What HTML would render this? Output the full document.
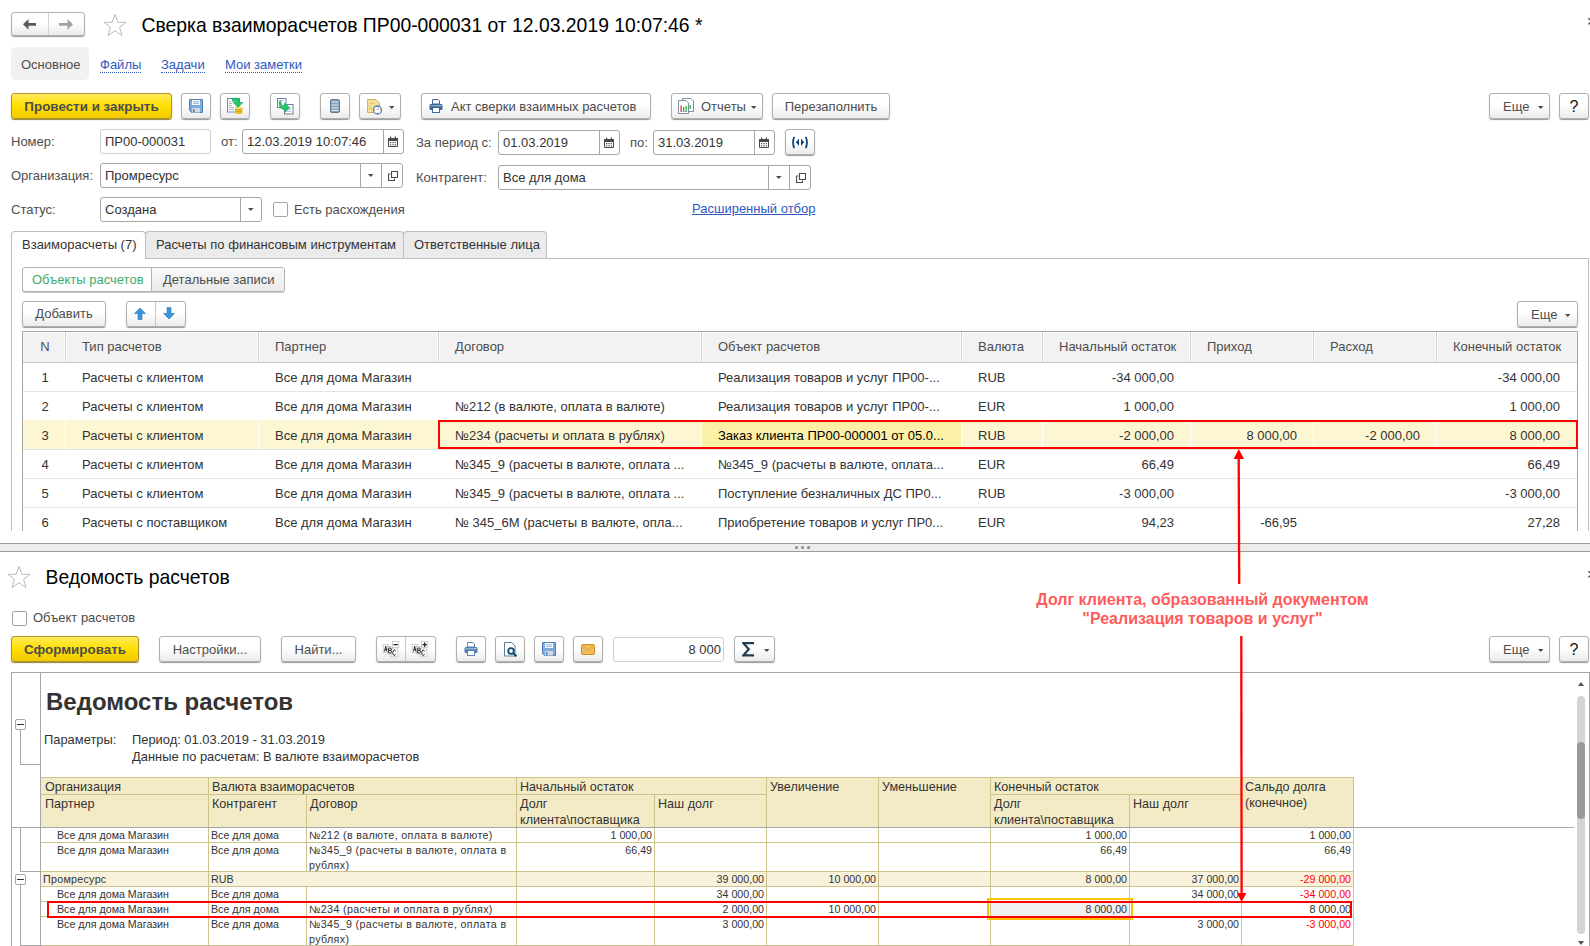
<!DOCTYPE html>
<html><head><meta charset="utf-8">
<style>
*{box-sizing:border-box;margin:0;padding:0}
html,body{width:1590px;height:946px;overflow:hidden;background:#fff}
body{position:relative;font-family:"Liberation Sans",sans-serif;font-size:13px;color:#4d4d4d}
.a{position:absolute}
.t{position:absolute;white-space:nowrap;line-height:16px}
.btn{position:absolute;border:1px solid #b0b0b0;border-radius:3px;background:linear-gradient(#fff 0%,#fff 45%,#ebebeb 100%);box-shadow:0 1px 1px #969696;color:#4d4d4d;text-align:center;white-space:nowrap}
.ybtn{position:absolute;border:1px solid #ad952c;border-radius:3px;background:linear-gradient(#ffe95a 0%,#ffe000 50%,#f2c800 100%);box-shadow:0 1px 1px #8f8130;color:#4d4d4d;font-weight:bold;font-size:13.4px;text-align:center;white-space:nowrap}
.fld{position:absolute;border:1px solid #a6a6a6;border-radius:3px;background:#fff;color:#333;white-space:nowrap;overflow:hidden}
.fld span{position:absolute;left:4px;top:4px;line-height:16px}
.dd{position:absolute;top:0;bottom:0;border-left:1px solid #a6a6a6}
.r{position:absolute;white-space:nowrap;font-size:10.67px;line-height:14.5px}
.link{color:#2f58c0;border-bottom:1px dotted #2f58c0}
</style></head><body>
<svg width="0" height="0" style="position:absolute">
 <defs>
  <g id="cal"><path d="M0.5 2.5 h9 v8 h-9 Z" fill="#fff" stroke="#4a4a4a" stroke-width="1"/><rect x="0" y="2" width="10" height="3" fill="#4a4a4a"/><rect x="2" y="0.5" width="1.2" height="2.5" fill="#4a4a4a"/><rect x="6.8" y="0.5" width="1.2" height="2.5" fill="#4a4a4a"/><g fill="#4a4a4a"><rect x="2" y="6" width="1.2" height="1.2"/><rect x="4.4" y="6" width="1.2" height="1.2"/><rect x="6.8" y="6" width="1.2" height="1.2"/><rect x="2" y="8.2" width="1.2" height="1.2"/><rect x="4.4" y="8.2" width="1.2" height="1.2"/><rect x="6.8" y="8.2" width="1.2" height="1.2"/></g></g>
  <g id="tri"><path d="M0 0 H5.5 L2.75 3 Z" fill="#4a4a4a"/></g>
  <g id="opn"><path d="M3.5 0.5 H9.5 V6.5 H3.5 Z" fill="#fff" stroke="#4a4a4a" stroke-width="1.1"/><path d="M2.5 3 H0.5 V9.5 H6.5 V7.5" fill="none" stroke="#4a4a4a" stroke-width="1.1"/></g>
 </defs>
</svg>

<!-- ======== TOP FORM ======== -->
<!-- nav buttons -->
<div class="btn" style="left:11px;top:12px;width:74px;height:24px"></div>
<div class="a" style="left:48px;top:13px;width:1px;height:22px;background:#d4d4d4"></div>
<svg class="a" style="left:22px;top:18px" width="16" height="13" viewBox="0 0 16 13"><path d="M1 6.3 L6.5 1 L6.5 5 L14 5 L14 7.8 L6.5 7.8 L6.5 11.8 Z" fill="#5a5a5a"/></svg>
<svg class="a" style="left:58px;top:18px" width="16" height="13" viewBox="0 0 16 13"><path d="M15 6.3 L9.5 1 L9.5 5 L1 5 L1 7.8 L9.5 7.8 L9.5 11.8 Z" fill="#a3a3a3"/></svg>
<!-- star -->
<svg class="a" style="left:102px;top:13px" width="26" height="24" viewBox="0 0 26 24"><path d="M13 1.5 L15.9 9.3 L24 9.3 L17.6 14.3 L19.9 22.5 L13 17.6 L6.1 22.5 L8.4 14.3 L2 9.3 L10.1 9.3 Z" fill="none" stroke="#b4bcc4" stroke-width="1"/></svg>
<div class="t" style="left:141.5px;top:14px;font-size:19.35px;line-height:22px;color:#000">Сверка взаиморасчетов ПР00-000031 от 12.03.2019 10:07:46 *</div>
<svg class="a" style="left:1586px;top:16px" width="4" height="10" viewBox="0 0 4 10"><path d="M2.4 2.2 L5.7 5.3 M2.4 8.4 L5.7 5.3" stroke="#3a3a3a" stroke-width="1.2" fill="none"/></svg>

<!-- section tabs -->
<div class="a" style="left:11px;top:47px;width:78px;height:33px;background:#f1f1f1;border-radius:5px"></div>
<div class="t" style="left:21px;top:57px;color:#4d4d4d">Основное</div>
<div class="t" style="left:100px;top:57px"><span class="link">Файлы</span></div>
<div class="t" style="left:161px;top:57px"><span class="link">Задачи</span></div>
<div class="t" style="left:225px;top:57px"><span class="link">Мои заметки</span></div>

<!-- toolbar -->
<div class="ybtn" style="left:11px;top:93px;width:161px;height:26px;line-height:25px">Провести и закрыть</div>
<div class="btn" style="left:181px;top:93px;width:30px;height:26px"></div>
<svg class="a" style="left:189px;top:99px" width="14" height="14" viewBox="0 0 14 14"><path d="M0.5 0.5 H13.5 V13.5 H2.5 L0.5 11.5 Z" fill="#7ea9dc" stroke="#4f7fb8" stroke-width="1"/><rect x="3" y="1" width="8" height="5" fill="#fff"/><rect x="4" y="2.3" width="6" height="0.9" fill="#7ea9dc"/><rect x="4" y="4.2" width="6" height="0.9" fill="#7ea9dc"/><rect x="3" y="9" width="8" height="4.5" fill="#d4dbe0"/><rect x="4" y="10" width="1.5" height="3" fill="#4f7fb8"/></svg>
<div class="btn" style="left:220px;top:93px;width:30px;height:26px"></div>
<svg class="a" style="left:226px;top:97px" width="18" height="18" viewBox="0 0 18 18"><rect x="1.5" y="1.5" width="12" height="13.5" fill="#fff" stroke="#6d89aa" stroke-width="1"/><g fill="#8aa0b8"><rect x="3" y="4" width="2" height="0.8"/><rect x="3" y="6" width="3" height="0.8"/><rect x="3" y="8" width="3" height="0.8"/><rect x="3" y="10" width="5" height="0.8"/><rect x="3" y="12" width="5" height="0.8"/></g><path d="M9 10.5 h7.4 v5 a3.7 1.6 0 0 1 -7.4 0 Z" fill="#e9c632"/><ellipse cx="12.7" cy="10.5" rx="3.7" ry="1.5" fill="#f7e07a"/><rect x="9" y="12.3" width="7.4" height="0.8" fill="#c9a20f"/><rect x="9" y="14.3" width="7.4" height="0.8" fill="#c9a20f"/><path d="M6.5 1.2 H10.5 Q13.5 1.2 13.5 4.2 V5.5 H16.8 L12 10.3 L7.2 5.5 H10.3 V4.6 Q10.3 4.3 10 4.3 H6.5 Z" fill="#22c76a" stroke="#129a4d" stroke-width="0.6"/></svg>
<div class="btn" style="left:270px;top:93px;width:30px;height:26px"></div>
<svg class="a" style="left:276px;top:97px" width="18" height="18" viewBox="0 0 18 18"><rect x="1.5" y="1.5" width="8.5" height="9" fill="#fff" stroke="#6d82a0" stroke-width="1"/><rect x="3" y="3.3" width="5" height="0.7" fill="#8aa0b8"/><rect x="8.5" y="7.5" width="8.5" height="9.5" fill="#fff" stroke="#6d82a0" stroke-width="1"/><g fill="#8aa0b8"><rect x="11" y="10" width="4" height="0.7"/><rect x="11" y="12" width="4" height="0.7"/><rect x="11" y="14" width="4" height="0.7"/></g><path d="M3 5 Q3.5 4 5 4.5 L5.5 8 Q6 9 8 8.5 L8.5 6 L13.5 10.5 L9 15.5 L8.8 12.5 Q4.5 12.5 3.5 9 Z" fill="#22c46a" stroke="#109a4c" stroke-width="0.5"/></svg>
<div class="btn" style="left:320px;top:93px;width:30px;height:26px"></div>
<svg class="a" style="left:330px;top:99px" width="10" height="14" viewBox="0 0 10 14"><rect x="0.5" y="0.5" width="9" height="13" rx="1.5" fill="#86a2bb" stroke="#5a7994" stroke-width="1"/><g fill="#dfe8f0"><rect x="1.5" y="2.5" width="7" height="1"/><rect x="1.5" y="5.5" width="7" height="1"/><rect x="1.5" y="8.5" width="7" height="1"/><rect x="1.5" y="11" width="7" height="1"/></g></svg>
<div class="btn" style="left:359px;top:93px;width:42px;height:26px"></div>
<svg class="a" style="left:366px;top:98px" width="16" height="17" viewBox="0 0 16 17"><path d="M1.5 1.5 H10 L13.5 5 V14.5 H1.5 Z" fill="#f1df9a" stroke="#d1b65c" stroke-width="1"/><g fill="#c9b36a"><rect x="3" y="5" width="2" height="0.8"/><rect x="6" y="5" width="2" height="0.8"/><rect x="3" y="7.5" width="1.5" height="0.8"/><rect x="3" y="10" width="3" height="0.8"/></g><circle cx="11.5" cy="12" r="4" fill="#fff" stroke="#5b86b8" stroke-width="1.3"/><g fill="#e02020"><circle cx="11.5" cy="8.6" r="0.6"/><circle cx="11.5" cy="15.4" r="0.6"/><circle cx="8.1" cy="12" r="0.6"/><circle cx="14.9" cy="12" r="0.6"/></g><path d="M11.5 12 L13 10" stroke="#5b86b8" stroke-width="0.8"/></svg>
<svg class="a" style="left:389px;top:106px" width="6" height="4"><use href="#tri"/></svg>
<div class="btn" style="left:421px;top:93px;width:230px;height:26px;line-height:25px;text-align:left;padding-left:29px">Акт сверки взаимных расчетов</div>
<svg class="a" style="left:429px;top:99px" width="14" height="14" viewBox="0 0 14 14"><path d="M3.5 0.5 H9 L10.5 2 V5 H3.5 Z" fill="#fff" stroke="#2c5a88" stroke-width="0.9"/><rect x="0.5" y="5" width="13" height="6" rx="1.5" fill="#3a6898"/><rect x="1.5" y="6.3" width="11" height="1" fill="#9fbad4"/><rect x="3.5" y="8.5" width="7" height="5" fill="#fff" stroke="#2c5a88" stroke-width="0.9"/><rect x="10.5" y="6.3" width="1" height="0.8" fill="#fff"/></svg>
<div class="btn" style="left:671px;top:93px;width:92px;height:26px;line-height:25px;text-align:left;padding-left:29px">Отчеты</div>
<svg class="a" style="left:678px;top:98px" width="17" height="17" viewBox="0 0 17 17"><path d="M4.5 0.5 H13 L15.5 3 V13.5 H4.5 Z" fill="#fff" stroke="#6f8296" stroke-width="0.9"/><path d="M0.5 2.5 H8 L10.5 5 V15.5 H0.5 Z" fill="#fff" stroke="#6f8296" stroke-width="0.9"/><rect x="2.5" y="7.5" width="1.3" height="5.5" fill="#e8352a"/><rect x="5" y="9" width="1.3" height="4" fill="#2fb24a"/><rect x="7.5" y="8" width="1.3" height="5" fill="#2fb24a"/><rect x="11.5" y="7" width="1.3" height="4" fill="#2fb24a"/><rect x="2" y="13" width="7.5" height="0.7" fill="#8a8a8a"/></svg>
<svg class="a" style="left:751px;top:106px" width="6" height="4"><use href="#tri"/></svg>
<div class="btn" style="left:772px;top:93px;width:118px;height:26px;line-height:25px">Перезаполнить</div>
<div class="btn" style="left:1489px;top:93px;width:61px;height:26px;line-height:25px;text-align:left;padding-left:13px">Еще</div>
<svg class="a" style="left:1538px;top:106px" width="6" height="4"><use href="#tri"/></svg>
<div class="btn" style="left:1559px;top:93px;width:30px;height:26px;line-height:25px;color:#111;font-size:16px">?</div>

<!-- fields row 1 -->
<div class="t" style="left:11px;top:134px">Номер:</div>
<div class="fld" style="left:100px;top:129px;width:111px;height:25px;border-color:#cfcfcf"><span>ПР00-000031</span></div>
<div class="t" style="left:221px;top:134px">от:</div>
<div class="fld" style="left:242px;top:129px;width:162px;height:25px"><span>12.03.2019 10:07:46</span><div class="dd" style="left:140px"></div><svg class="a" style="left:145px;top:6px" width="10" height="11"><use href="#cal"/></svg></div>
<div class="t" style="left:416px;top:135px">За период с:</div>
<div class="fld" style="left:498px;top:130px;width:122px;height:25px"><span>01.03.2019</span><div class="dd" style="left:100px"></div><svg class="a" style="left:105px;top:6px" width="10" height="11"><use href="#cal"/></svg></div>
<div class="t" style="left:630px;top:135px">по:</div>
<div class="fld" style="left:653px;top:130px;width:122px;height:25px"><span>31.03.2019</span><div class="dd" style="left:100px"></div><svg class="a" style="left:105px;top:6px" width="10" height="11"><use href="#cal"/></svg></div>
<div class="btn" style="left:785px;top:129px;width:30px;height:26px"></div>
<svg class="a" style="left:791px;top:136px" width="18" height="13" viewBox="0 0 18 13"><path d="M3.3 0.8 Q0.8 6.5 3.3 12.2" fill="none" stroke="#0e4a7c" stroke-width="1.8"/><path d="M14.7 0.8 Q17.2 6.5 14.7 12.2" fill="none" stroke="#0e4a7c" stroke-width="1.8"/><path d="M8 2.5 L8 10 L4.8 6.3 Z" fill="#0e4a7c"/><path d="M10 2.5 L10 10 L13.2 6.3 Z" fill="#0e4a7c"/></svg>

<!-- fields row 2 -->
<div class="t" style="left:11px;top:168px">Организация:</div>
<div class="fld" style="left:100px;top:163px;width:303px;height:25px"><span>Промресурс</span><div class="dd" style="left:259px"></div><div class="dd" style="left:280px"></div><svg class="a" style="left:267px;top:10px" width="6" height="4"><use href="#tri"/></svg><svg class="a" style="left:287px;top:7px" width="10" height="10"><use href="#opn"/></svg></div>
<div class="t" style="left:416px;top:170px">Контрагент:</div>
<div class="fld" style="left:498px;top:165px;width:313px;height:25px"><span>Все для дома</span><div class="dd" style="left:269px"></div><div class="dd" style="left:290px"></div><svg class="a" style="left:277px;top:10px" width="6" height="4"><use href="#tri"/></svg><svg class="a" style="left:297px;top:7px" width="10" height="10"><use href="#opn"/></svg></div>

<!-- fields row 3 -->
<div class="t" style="left:11px;top:202px">Статус:</div>
<div class="fld" style="left:100px;top:197px;width:162px;height:25px"><span>Создана</span><div class="dd" style="left:139px"></div><svg class="a" style="left:147px;top:10px" width="6" height="4"><use href="#tri"/></svg></div>
<div class="a" style="left:273px;top:202px;width:15px;height:15px;border:1px solid #a6a6a6;border-radius:2px;background:#fff"></div>
<div class="t" style="left:294px;top:202px">Есть расхождения</div>
<div class="t" style="left:692px;top:201px;color:#2f58c0;text-decoration:underline">Расширенный отбор</div>

<!-- tabs -->
<div class="a" style="left:11px;top:258px;width:1578px;height:1px;background:#bdbdbd"></div>
<div class="a" style="left:1588px;top:258px;width:1px;height:273px;background:#bdbdbd"></div>
<div class="a" style="left:11px;top:258px;width:1px;height:273px;background:#bdbdbd"></div>
<div class="a" style="left:145px;top:231px;width:259px;height:27px;border:1px solid #bdbdbd;border-bottom:none;border-radius:4px 4px 0 0;background:#ebebeb"></div>
<div class="t" style="left:156px;top:237px;color:#333">Расчеты по финансовым инструментам</div>
<div class="a" style="left:403px;top:231px;width:144px;height:27px;border:1px solid #bdbdbd;border-bottom:none;border-radius:4px 4px 0 0;background:#ebebeb"></div>
<div class="t" style="left:414px;top:237px;color:#333">Ответственные лица</div>
<div class="a" style="left:11px;top:231px;width:135px;height:28px;border:1px solid #bdbdbd;border-bottom:none;border-radius:4px 4px 0 0;background:#fff"></div>
<div class="t" style="left:22px;top:237px;color:#333">Взаиморасчеты (7)</div>

<!-- subtabs -->
<div class="a" style="left:22px;top:267px;width:263px;height:25px;border:1px solid #b3b3b3;border-radius:3px;background:#fff;box-shadow:0 1px 0 #c8c8c8"></div>
<div class="a" style="left:151px;top:268px;width:133px;height:23px;border-left:1px solid #b3b3b3;background:linear-gradient(#fafafa,#e9e9e9);border-radius:0 2px 2px 0"></div>
<div class="t" style="left:32px;top:272px;color:#40ad6d">Объекты расчетов</div>
<div class="t" style="left:163px;top:272px;color:#4d4d4d">Детальные записи</div>

<!-- add / arrows -->
<div class="btn" style="left:22px;top:301px;width:84px;height:26px;line-height:24px">Добавить</div>
<div class="btn" style="left:126px;top:301px;width:60px;height:26px"></div>
<div class="a" style="left:155px;top:302px;width:1px;height:24px;background:#c8c8c8"></div>
<svg class="a" style="left:134px;top:307px" width="12" height="14" viewBox="0 0 12 14"><path d="M6 1 L11.5 6.5 L8 6.5 L8 12.5 L4 12.5 L4 6.5 L0.5 6.5 Z" fill="#3a96dc" stroke="#2a78b8" stroke-width="0.6"/></svg>
<svg class="a" style="left:163px;top:306px" width="12" height="14" viewBox="0 0 12 14"><path d="M6 13 L11.5 7.5 L8 7.5 L8 1.5 L4 1.5 L4 7.5 L0.5 7.5 Z" fill="#3a96dc" stroke="#2a78b8" stroke-width="0.6"/></svg>
<div class="btn" style="left:1517px;top:301px;width:61px;height:26px;line-height:25px;text-align:left;padding-left:13px">Еще</div>
<svg class="a" style="left:1565px;top:314px" width="6" height="4"><use href="#tri"/></svg>

<!-- table -->
<div class="a" style="left:22px;top:331px;width:1556px;height:200px;border:1px solid #a8a8a8;border-bottom:none;overflow:hidden;background:#fff">
 <div class="a" style="left:0;top:0;width:1556px;height:30px;background:#f2f2f2;border-bottom:1px solid #d0d0d0"></div>
</div>

<div class="a" style="left:0;top:0;width:1590px;height:531px;overflow:hidden">
<div class="a" style="left:22px;top:331px;width:1556px;height:200px;border-left:1px solid #a6a6a6;border-top:1px solid #a6a6a6;border-right:1px solid #a6a6a6"></div>
<div class="a" style="left:23px;top:332px;width:1554px;height:31px;background:#f2f2f2;border-top:1px solid #fff;border-bottom:1px solid #c9c9c9"></div>
<div class="a" style="left:64px;top:332px;width:3px;height:30px;background:#fff"></div>
<div class="a" style="left:65px;top:332px;width:1px;height:30px;background:#cfcfcf"></div>
<div class="a" style="left:257px;top:332px;width:3px;height:30px;background:#fff"></div>
<div class="a" style="left:258px;top:332px;width:1px;height:30px;background:#cfcfcf"></div>
<div class="a" style="left:437px;top:332px;width:3px;height:30px;background:#fff"></div>
<div class="a" style="left:438px;top:332px;width:1px;height:30px;background:#cfcfcf"></div>
<div class="a" style="left:700px;top:332px;width:3px;height:30px;background:#fff"></div>
<div class="a" style="left:701px;top:332px;width:1px;height:30px;background:#cfcfcf"></div>
<div class="a" style="left:960px;top:332px;width:3px;height:30px;background:#fff"></div>
<div class="a" style="left:961px;top:332px;width:1px;height:30px;background:#cfcfcf"></div>
<div class="a" style="left:1041px;top:332px;width:3px;height:30px;background:#fff"></div>
<div class="a" style="left:1042px;top:332px;width:1px;height:30px;background:#cfcfcf"></div>
<div class="a" style="left:1189px;top:332px;width:3px;height:30px;background:#fff"></div>
<div class="a" style="left:1190px;top:332px;width:1px;height:30px;background:#cfcfcf"></div>
<div class="a" style="left:1312px;top:332px;width:3px;height:30px;background:#fff"></div>
<div class="a" style="left:1313px;top:332px;width:1px;height:30px;background:#cfcfcf"></div>
<div class="a" style="left:1435px;top:332px;width:3px;height:30px;background:#fff"></div>
<div class="a" style="left:1436px;top:332px;width:1px;height:30px;background:#cfcfcf"></div>
<div class="t" style="left:24px;width:42px;text-align:center;top:339px;color:#4d4d4d">N</div>
<div class="t" style="left:82px;top:339px;color:#4d4d4d">Тип расчетов</div>
<div class="t" style="left:275px;top:339px;color:#4d4d4d">Партнер</div>
<div class="t" style="left:455px;top:339px;color:#4d4d4d">Договор</div>
<div class="t" style="left:718px;top:339px;color:#4d4d4d">Объект расчетов</div>
<div class="t" style="left:978px;top:339px;color:#4d4d4d">Валюта</div>
<div class="t" style="left:1059px;top:339px;color:#4d4d4d">Начальный остаток</div>
<div class="t" style="left:1207px;top:339px;color:#4d4d4d">Приход</div>
<div class="t" style="left:1330px;top:339px;color:#4d4d4d">Расход</div>
<div class="t" style="left:1453px;top:339px;color:#4d4d4d">Конечный остаток</div>
<div class="a" style="left:23px;top:391px;width:1554px;height:1px;background:#e4e4e4"></div>
<div class="t" style="left:24px;width:42px;text-align:center;top:370px;color:#333">1</div>
<div class="t" style="left:82px;top:370px;color:#333">Расчеты с клиентом</div>
<div class="t" style="left:275px;top:370px;color:#333">Все для дома Магазин</div>
<div class="t" style="left:718px;top:370px;color:#333">Реализация товаров и услуг ПР00-...</div>
<div class="t" style="left:978px;top:370px;color:#333">RUB</div>
<div class="t" style="right:416px;top:370px;color:#333">-34 000,00</div>
<div class="t" style="right:30px;top:370px;color:#333">-34 000,00</div>
<div class="a" style="left:23px;top:420px;width:1554px;height:1px;background:#e4e4e4"></div>
<div class="t" style="left:24px;width:42px;text-align:center;top:399px;color:#333">2</div>
<div class="t" style="left:82px;top:399px;color:#333">Расчеты с клиентом</div>
<div class="t" style="left:275px;top:399px;color:#333">Все для дома Магазин</div>
<div class="t" style="left:455px;top:399px;color:#333">№212 (в валюте, оплата в валюте)</div>
<div class="t" style="left:718px;top:399px;color:#333">Реализация товаров и услуг ПР00-...</div>
<div class="t" style="left:978px;top:399px;color:#333">EUR</div>
<div class="t" style="right:416px;top:399px;color:#333">1 000,00</div>
<div class="t" style="right:30px;top:399px;color:#333">1 000,00</div>
<div class="a" style="left:23px;top:420px;width:1554px;height:29px;background:#fdf6d2"></div>
<div class="a" style="left:702px;top:420px;width:259px;height:29px;background:#fcefa6"></div>
<div class="a" style="left:65px;top:420px;width:1px;height:29px;background:#fff"></div>
<div class="a" style="left:258px;top:420px;width:1px;height:29px;background:#fff"></div>
<div class="a" style="left:438px;top:420px;width:1px;height:29px;background:#fff"></div>
<div class="a" style="left:701px;top:420px;width:1px;height:29px;background:#fff"></div>
<div class="a" style="left:961px;top:420px;width:1px;height:29px;background:#fff"></div>
<div class="a" style="left:1042px;top:420px;width:1px;height:29px;background:#fff"></div>
<div class="a" style="left:1190px;top:420px;width:1px;height:29px;background:#fff"></div>
<div class="a" style="left:1313px;top:420px;width:1px;height:29px;background:#fff"></div>
<div class="a" style="left:1436px;top:420px;width:1px;height:29px;background:#fff"></div>
<div class="a" style="left:23px;top:449px;width:1554px;height:1px;background:#e4e4e4"></div>
<div class="t" style="left:24px;width:42px;text-align:center;top:428px;color:#333">3</div>
<div class="t" style="left:82px;top:428px;color:#333">Расчеты с клиентом</div>
<div class="t" style="left:275px;top:428px;color:#333">Все для дома Магазин</div>
<div class="t" style="left:455px;top:428px;color:#333">№234 (расчеты и оплата в рублях)</div>
<div class="t" style="left:718px;top:428px;color:#000">Заказ клиента ПР00-000001 от 05.0...</div>
<div class="t" style="left:978px;top:428px;color:#333">RUB</div>
<div class="t" style="right:416px;top:428px;color:#333">-2 000,00</div>
<div class="t" style="right:293px;top:428px;color:#333">8 000,00</div>
<div class="t" style="right:170px;top:428px;color:#333">-2 000,00</div>
<div class="t" style="right:30px;top:428px;color:#333">8 000,00</div>
<div class="a" style="left:23px;top:478px;width:1554px;height:1px;background:#e4e4e4"></div>
<div class="t" style="left:24px;width:42px;text-align:center;top:457px;color:#333">4</div>
<div class="t" style="left:82px;top:457px;color:#333">Расчеты с клиентом</div>
<div class="t" style="left:275px;top:457px;color:#333">Все для дома Магазин</div>
<div class="t" style="left:455px;top:457px;color:#333">№345_9 (расчеты в валюте, оплата ...</div>
<div class="t" style="left:718px;top:457px;color:#333">№345_9 (расчеты в валюте, оплата...</div>
<div class="t" style="left:978px;top:457px;color:#333">EUR</div>
<div class="t" style="right:416px;top:457px;color:#333">66,49</div>
<div class="t" style="right:30px;top:457px;color:#333">66,49</div>
<div class="a" style="left:23px;top:507px;width:1554px;height:1px;background:#e4e4e4"></div>
<div class="t" style="left:24px;width:42px;text-align:center;top:486px;color:#333">5</div>
<div class="t" style="left:82px;top:486px;color:#333">Расчеты с клиентом</div>
<div class="t" style="left:275px;top:486px;color:#333">Все для дома Магазин</div>
<div class="t" style="left:455px;top:486px;color:#333">№345_9 (расчеты в валюте, оплата ...</div>
<div class="t" style="left:718px;top:486px;color:#333">Поступление безналичных ДС ПР0...</div>
<div class="t" style="left:978px;top:486px;color:#333">RUB</div>
<div class="t" style="right:416px;top:486px;color:#333">-3 000,00</div>
<div class="t" style="right:30px;top:486px;color:#333">-3 000,00</div>
<div class="t" style="left:24px;width:42px;text-align:center;top:515px;color:#333">6</div>
<div class="t" style="left:82px;top:515px;color:#333">Расчеты с поставщиком</div>
<div class="t" style="left:275px;top:515px;color:#333">Все для дома Магазин</div>
<div class="t" style="left:455px;top:515px;color:#333">№ 345_6М (расчеты в валюте, опла...</div>
<div class="t" style="left:718px;top:515px;color:#333">Приобретение товаров и услуг ПР0...</div>
<div class="t" style="left:978px;top:515px;color:#333">EUR</div>
<div class="t" style="right:416px;top:515px;color:#333">94,23</div>
<div class="t" style="right:293px;top:515px;color:#333">-66,95</div>
<div class="t" style="right:30px;top:515px;color:#333">27,28</div>
<div class="a" style="left:438px;top:420px;width:140px;height:29px;border:2px solid #ff0000;width:1140px"></div>
</div>
<!-- splitter -->
<div class="a" style="left:0;top:543px;width:1590px;height:9px;background:#ececec;border-top:1px solid #9c9c9c;border-bottom:1px solid #9c9c9c"></div>
<div class="a" style="left:795px;top:546px;width:3px;height:3px;border-radius:50%;background:#888"></div>
<div class="a" style="left:801px;top:546px;width:3px;height:3px;border-radius:50%;background:#888"></div>
<div class="a" style="left:807px;top:546px;width:3px;height:3px;border-radius:50%;background:#888"></div>

<!-- ======== BOTTOM FORM ======== -->
<svg class="a" style="left:6px;top:565px" width="26" height="24" viewBox="0 0 26 24"><path d="M13 1.5 L15.9 9.3 L24 9.3 L17.6 14.3 L19.9 22.5 L13 17.6 L6.1 22.5 L8.4 14.3 L2 9.3 L10.1 9.3 Z" fill="none" stroke="#b4bcc4" stroke-width="1"/></svg>
<div class="t" style="left:45.5px;top:566px;font-size:19.35px;line-height:22px;color:#000">Ведомость расчетов</div>
<svg class="a" style="left:1586px;top:569px" width="4" height="10" viewBox="0 0 4 10"><path d="M2.4 2.2 L5.7 5.3 M2.4 8.4 L5.7 5.3" stroke="#3a3a3a" stroke-width="1.2" fill="none"/></svg>

<div class="a" style="left:12px;top:611px;width:15px;height:15px;border:1px solid #a3a3a3;border-radius:2px;background:#fff"></div>
<div class="t" style="left:33px;top:610px">Объект расчетов</div>

<div class="ybtn" style="left:11px;top:636px;width:128px;height:26px;line-height:25px">Сформировать</div>
<div class="btn" style="left:159px;top:636px;width:102px;height:26px;line-height:25px">Настройки...</div>
<div class="btn" style="left:281px;top:636px;width:75px;height:26px;line-height:25px">Найти...</div>
<div class="btn" style="left:376px;top:636px;width:60px;height:26px"></div>
<div class="a" style="left:405px;top:637px;width:1px;height:24px;background:#c8c8c8"></div>
<svg class="a" style="left:382px;top:641px" width="18" height="17" viewBox="0 0 18 17"><g stroke="#c4c4c4" stroke-width="0.8" fill="#fff"><rect x="1.2" y="3.4" width="5" height="8.2"/><rect x="5.4" y="5.3" width="4.8" height="7.8"/><rect x="9.3" y="8" width="6.6" height="7.8"/><rect x="10.5" y="0.4" width="6.2" height="6.2"/></g><g stroke="#2a2a2a" stroke-width="1" fill="none"><path d="M2.5 10.5 L3.7 5.2 L4.9 10.5 M2.9 8.6 H4.5"/><path d="M6.7 12 V7 H8.2 Q9.3 7 9.3 8.2 Q9.3 9.4 8.2 9.4 H6.7 M8.2 9.4 Q9.5 9.4 9.5 10.7 Q9.5 12 8.2 12 H6.7"/><path d="M13.6 10.4 Q13.2 9.2 12.2 9.2 Q10.8 9.2 10.8 11.8 Q10.8 14.4 12.2 14.4 Q13.2 14.4 13.6 13.2"/></g><rect x="11.5" y="3" width="4.3" height="1.3" fill="#222"/></svg>
<svg class="a" style="left:411px;top:641px" width="18" height="17" viewBox="0 0 18 17"><g stroke="#c4c4c4" stroke-width="0.8" fill="#fff"><rect x="1.2" y="3.4" width="5" height="8.2"/><rect x="5.4" y="5.3" width="4.8" height="7.8"/><rect x="9.3" y="8" width="6.6" height="7.8"/><rect x="10.5" y="0.4" width="6.2" height="6.2"/></g><g stroke="#2a2a2a" stroke-width="1" fill="none"><path d="M2.5 10.5 L3.7 5.2 L4.9 10.5 M2.9 8.6 H4.5"/><path d="M6.7 12 V7 H8.2 Q9.3 7 9.3 8.2 Q9.3 9.4 8.2 9.4 H6.7 M8.2 9.4 Q9.5 9.4 9.5 10.7 Q9.5 12 8.2 12 H6.7"/><path d="M13.6 10.4 Q13.2 9.2 12.2 9.2 Q10.8 9.2 10.8 11.8 Q10.8 14.4 12.2 14.4 Q13.2 14.4 13.6 13.2"/></g><rect x="11.5" y="3" width="4.3" height="1.3" fill="#222"/><rect x="13" y="1.5" width="1.3" height="4.3" fill="#222"/></svg>
<div class="btn" style="left:456px;top:636px;width:30px;height:26px"></div>
<svg class="a" style="left:464px;top:642px" width="14" height="14" viewBox="0 0 14 14"><path d="M3.5 0.5 H9 L10.5 2 V5 H3.5 Z" fill="#fff" stroke="#4a78a8" stroke-width="0.9"/><rect x="0.5" y="5" width="13" height="6" rx="1.5" fill="#4f7fb0"/><rect x="1.5" y="6.3" width="11" height="1" fill="#a9c3dc"/><rect x="3.5" y="8.5" width="7" height="5" fill="#fff" stroke="#4a78a8" stroke-width="0.9"/><rect x="10.5" y="6.3" width="1" height="0.8" fill="#fff"/></svg>
<div class="btn" style="left:495px;top:636px;width:30px;height:26px"></div>
<svg class="a" style="left:504px;top:642px" width="14" height="15" viewBox="0 0 14 15"><path d="M0.5 0.5 H7.5 L11 4 V14 H0.5 Z" fill="#fff" stroke="#4f6f8f" stroke-width="0.9"/><circle cx="7" cy="9" r="2.8" fill="#fff" stroke="#0b4d6e" stroke-width="1.8"/><path d="M9 11 L12.5 14.3" stroke="#0b4d6e" stroke-width="2"/></svg>
<div class="btn" style="left:534px;top:636px;width:30px;height:26px"></div>
<svg class="a" style="left:542px;top:642px" width="14" height="14" viewBox="0 0 14 14"><path d="M0.5 0.5 H13.5 V13.5 H2.5 L0.5 11.5 Z" fill="#7ea9dc" stroke="#4f7fb8" stroke-width="1"/><rect x="3" y="1" width="8" height="5" fill="#fff"/><rect x="4" y="2.3" width="6" height="0.9" fill="#7ea9dc"/><rect x="4" y="4.2" width="6" height="0.9" fill="#7ea9dc"/><rect x="3" y="9" width="8" height="4.5" fill="#d4dbe0"/><rect x="4" y="10" width="1.5" height="3" fill="#4f7fb8"/></svg>
<div class="btn" style="left:573px;top:636px;width:30px;height:26px"></div>
<svg class="a" style="left:581px;top:644px" width="14" height="11" viewBox="0 0 14 11"><rect x="0.5" y="0.5" width="13" height="10" rx="1.2" fill="#f3bc5c" stroke="#d38e22" stroke-width="1"/><path d="M1 1.2 L7 6.2 L13 1.2" fill="none" stroke="#d9a040" stroke-width="0.9"/><path d="M1 10 L5.5 5.5 M13 10 L8.5 5.5" stroke="#e0ad55" stroke-width="0.7"/></svg>
<div class="fld" style="left:613px;top:637px;width:111px;height:25px;border-color:#d0d0d0"><span style="left:auto;right:2px;color:#333">8 000</span></div>
<div class="btn" style="left:734px;top:636px;width:41px;height:26px"></div>
<svg class="a" style="left:742px;top:642px" width="13" height="15" viewBox="0 0 13 15"><path d="M12 1.2 H1.5 L6.8 7.2 L1.5 13.3 H12" fill="none" stroke="#233d52" stroke-width="2.2" stroke-linejoin="miter"/></svg>
<svg class="a" style="left:764px;top:649px" width="6" height="4"><use href="#tri"/></svg>
<div class="btn" style="left:1489px;top:636px;width:61px;height:26px;line-height:25px;text-align:left;padding-left:13px">Еще</div>
<svg class="a" style="left:1538px;top:649px" width="6" height="4"><use href="#tri"/></svg>
<div class="btn" style="left:1559px;top:636px;width:30px;height:26px;line-height:25px;color:#111;font-size:16px">?</div>

<!-- report frame -->
<div class="a" style="left:11px;top:672px;width:1579px;height:274px;border-left:1px solid #a6a6a6;border-top:1px solid #a6a6a6;border-right:1px solid #a6a6a6"></div>
<div class="a" style="left:40px;top:673px;width:1px;height:273px;background:#a6a6a6"></div>

<div class="a" style="left:0;top:673px;width:1588px;height:273px;overflow:hidden"><div class="a" style="left:0;top:-673px;width:1590px;height:946px">
<div class="t" style="left:46px;top:687.5px;font-size:24px;line-height:28px;font-weight:bold;color:#333">Ведомость расчетов</div>
<div class="t" style="left:44px;top:731px;font-size:12.9px;line-height:17px;color:#333">Параметры:</div>
<div class="t" style="left:132px;top:731px;font-size:12.9px;line-height:17px;color:#333">Период: 01.03.2019 - 31.03.2019</div>
<div class="t" style="left:132px;top:748px;font-size:12.9px;line-height:17px;color:#333">Данные по расчетам: В валюте взаиморасчетов</div>
<div class="a" style="left:15px;top:719px;width:11px;height:11px;border:1px solid #a6a6a6;border-radius:2px;background:#fff"></div>
<div class="a" style="left:17px;top:724px;width:7px;height:1px;background:#333"></div>
<div class="a" style="left:20px;top:730px;width:1px;height:35px;background:#a6a6a6"></div>
<div class="a" style="left:20px;top:764px;width:21px;height:1px;background:#a6a6a6"></div>
<div class="a" style="left:41px;top:777px;width:1312px;height:50px;background:#f3ebc6"></div>
<div class="a" style="left:41px;top:777px;width:1313px;height:1px;background:#cfc38c"></div>
<div class="a" style="left:41px;top:794px;width:1201px;height:1px;background:#cfc38c"></div>
<div class="a" style="left:767px;top:794px;width:111px;height:1px;background:#f3ebc6"></div>
<div class="a" style="left:879px;top:794px;width:111px;height:1px;background:#f3ebc6"></div>
<div class="a" style="left:1242px;top:794px;width:111px;height:1px;background:#f3ebc6"></div>
<div class="a" style="left:208px;top:777px;width:1px;height:51px;background:#cfc38c"></div>
<div class="a" style="left:516px;top:777px;width:1px;height:51px;background:#cfc38c"></div>
<div class="a" style="left:766px;top:777px;width:1px;height:51px;background:#cfc38c"></div>
<div class="a" style="left:878px;top:777px;width:1px;height:51px;background:#cfc38c"></div>
<div class="a" style="left:990px;top:777px;width:1px;height:51px;background:#cfc38c"></div>
<div class="a" style="left:1241px;top:777px;width:1px;height:51px;background:#cfc38c"></div>
<div class="a" style="left:1353px;top:777px;width:1px;height:51px;background:#cfc38c"></div>
<div class="a" style="left:306px;top:794px;width:1px;height:34px;background:#cfc38c"></div>
<div class="a" style="left:654px;top:794px;width:1px;height:34px;background:#cfc38c"></div>
<div class="a" style="left:1129px;top:794px;width:1px;height:34px;background:#cfc38c"></div>
<div class="a" style="left:11px;top:827px;width:1563px;height:1px;background:#a6a6a6"></div>
<div class="r" style="left:45px;top:779px;color:#333;font-size:12.6px;line-height:16.3px">Организация</div>
<div class="r" style="left:212px;top:779px;color:#333;font-size:12.6px;line-height:16.3px">Валюта взаиморасчетов</div>
<div class="r" style="left:520px;top:779px;color:#333;font-size:12.6px;line-height:16.3px">Начальный остаток</div>
<div class="r" style="left:770px;top:779px;color:#333;font-size:12.6px;line-height:16.3px">Увеличение</div>
<div class="r" style="left:882px;top:779px;color:#333;font-size:12.6px;line-height:16.3px">Уменьшение</div>
<div class="r" style="left:994px;top:779px;color:#333;font-size:12.6px;line-height:16.3px">Конечный остаток</div>
<div class="r" style="left:1245px;top:779px;color:#333;font-size:12.6px;line-height:16.3px">Сальдо долга<br>(конечное)</div>
<div class="r" style="left:45px;top:795.5px;color:#333;font-size:12.6px;line-height:16.3px">Партнер</div>
<div class="r" style="left:212px;top:795.5px;color:#333;font-size:12.6px;line-height:16.3px">Контрагент</div>
<div class="r" style="left:310px;top:795.5px;color:#333;font-size:12.6px;line-height:16.3px">Договор</div>
<div class="r" style="left:520px;top:795.5px;color:#333;font-size:12.6px;line-height:16.3px">Долг<br>клиента\поставщика</div>
<div class="r" style="left:658px;top:795.5px;color:#333;font-size:12.6px;line-height:16.3px">Наш долг</div>
<div class="r" style="left:994px;top:795.5px;color:#333;font-size:12.6px;line-height:16.3px">Долг<br>клиента\поставщика</div>
<div class="r" style="left:1133px;top:795.5px;color:#333;font-size:12.6px;line-height:16.3px">Наш долг</div>
<div class="a" style="left:41px;top:842px;width:1313px;height:1px;background:#cfc38c"></div>
<div class="r" style="left:57px;top:828px;color:#333;">Все для дома Магазин</div>
<div class="r" style="left:211px;top:828px;color:#333;">Все для дома</div>
<div class="r" style="left:309px;top:828px;color:#333;letter-spacing:0.37px">№212 (в валюте, оплата в валюте)</div>
<div class="r" style="right:938px;top:828px;color:#333">1 000,00</div>
<div class="r" style="right:463px;top:828px;color:#333">1 000,00</div>
<div class="r" style="right:239px;top:828px;color:#333">1 000,00</div>
<div class="a" style="left:41px;top:871px;width:1313px;height:1px;background:#cfc38c"></div>
<div class="r" style="left:57px;top:843px;color:#333;">Все для дома Магазин</div>
<div class="r" style="left:211px;top:843px;color:#333;">Все для дома</div>
<div class="r" style="left:309px;top:843px;color:#333;letter-spacing:0.37px">№345_9 (расчеты в валюте, оплата в<br>рублях)</div>
<div class="r" style="right:938px;top:843px;color:#333">66,49</div>
<div class="r" style="right:463px;top:843px;color:#333">66,49</div>
<div class="r" style="right:239px;top:843px;color:#333">66,49</div>
<div class="a" style="left:41px;top:872px;width:1312px;height:14px;background:#f8f1dc"></div>
<div class="a" style="left:41px;top:886px;width:1313px;height:1px;background:#cfc38c"></div>
<div class="r" style="left:43px;top:872px;color:#333;letter-spacing:0.3px">Промресурс</div>
<div class="r" style="left:211px;top:872px;color:#333;">RUB</div>
<div class="r" style="right:826px;top:872px;color:#333">39 000,00</div>
<div class="r" style="right:714px;top:872px;color:#333">10 000,00</div>
<div class="r" style="right:463px;top:872px;color:#333">8 000,00</div>
<div class="r" style="right:351px;top:872px;color:#333">37 000,00</div>
<div class="r" style="right:239px;top:872px;color:#ff0000">-29 000,00</div>
<div class="a" style="left:41px;top:901px;width:1313px;height:1px;background:#cfc38c"></div>
<div class="r" style="left:57px;top:887px;color:#333;">Все для дома Магазин</div>
<div class="r" style="left:211px;top:887px;color:#333;">Все для дома</div>
<div class="r" style="right:826px;top:887px;color:#333">34 000,00</div>
<div class="r" style="right:351px;top:887px;color:#333">34 000,00</div>
<div class="r" style="right:239px;top:887px;color:#ff0000">-34 000,00</div>
<div class="a" style="left:991px;top:902px;width:138px;height:14px;background:#f0f0f0"></div>
<div class="a" style="left:41px;top:916px;width:1313px;height:1px;background:#cfc38c"></div>
<div class="r" style="left:57px;top:902px;color:#333;">Все для дома Магазин</div>
<div class="r" style="left:211px;top:902px;color:#333;">Все для дома</div>
<div class="r" style="left:309px;top:902px;color:#333;letter-spacing:0.37px">№234 (расчеты и оплата в рублях)</div>
<div class="r" style="right:826px;top:902px;color:#333">2 000,00</div>
<div class="r" style="right:714px;top:902px;color:#333">10 000,00</div>
<div class="r" style="right:463px;top:902px;color:#333">8 000,00</div>
<div class="r" style="right:239px;top:902px;color:#333">8 000,00</div>
<div class="a" style="left:41px;top:945px;width:1313px;height:1px;background:#cfc38c"></div>
<div class="r" style="left:57px;top:917px;color:#333;">Все для дома Магазин</div>
<div class="r" style="left:211px;top:917px;color:#333;">Все для дома</div>
<div class="r" style="left:309px;top:917px;color:#333;letter-spacing:0.37px">№345_9 (расчеты в валюте, оплата в<br>рублях)</div>
<div class="r" style="right:826px;top:917px;color:#333">3 000,00</div>
<div class="r" style="right:351px;top:917px;color:#333">3 000,00</div>
<div class="r" style="right:239px;top:917px;color:#ff0000">-3 000,00</div>
<div class="a" style="left:208px;top:828px;width:1px;height:118px;background:#cfc38c"></div>
<div class="a" style="left:306px;top:828px;width:1px;height:44px;background:#cfc38c"></div>
<div class="a" style="left:306px;top:887px;width:1px;height:59px;background:#cfc38c"></div>
<div class="a" style="left:516px;top:828px;width:1px;height:118px;background:#cfc38c"></div>
<div class="a" style="left:654px;top:828px;width:1px;height:118px;background:#cfc38c"></div>
<div class="a" style="left:766px;top:828px;width:1px;height:118px;background:#cfc38c"></div>
<div class="a" style="left:878px;top:828px;width:1px;height:118px;background:#cfc38c"></div>
<div class="a" style="left:990px;top:828px;width:1px;height:118px;background:#cfc38c"></div>
<div class="a" style="left:1129px;top:828px;width:1px;height:118px;background:#cfc38c"></div>
<div class="a" style="left:1241px;top:828px;width:1px;height:118px;background:#cfc38c"></div>
<div class="a" style="left:1353px;top:828px;width:1px;height:118px;background:#cfc38c"></div>
<div class="a" style="left:20px;top:828px;width:1px;height:44px;background:#a6a6a6"></div>
<div class="a" style="left:20px;top:871px;width:21px;height:1px;background:#a6a6a6"></div>
<div class="a" style="left:15px;top:874px;width:11px;height:11px;border:1px solid #a6a6a6;border-radius:2px;background:#fff"></div>
<div class="a" style="left:17px;top:879px;width:7px;height:1px;background:#333"></div>
<div class="a" style="left:20px;top:885px;width:1px;height:61px;background:#a6a6a6"></div>
<div class="a" style="left:20px;top:945px;width:21px;height:1px;background:#a6a6a6"></div>
<div class="a" style="left:987px;top:898px;width:146px;height:22px;border:2px solid #fdc300"></div>
<div class="a" style="left:47px;top:901px;width:1305px;height:17px;border:2px solid #ff0000"></div>
<div class="a" style="left:1577px;top:696px;width:8px;height:238px;border-radius:4px;background:#d4d4d4"></div>
<div class="a" style="left:1577px;top:742px;width:8px;height:77px;border-radius:4px;background:#9a9a9a"></div>
<div class="a" style="left:1578px;top:682px;width:0;height:0;border-left:3px solid transparent;border-right:3px solid transparent;border-bottom:4px solid #555"></div>
<div class="a" style="left:1578px;top:941px;width:0;height:0;border-left:3px solid transparent;border-right:3px solid transparent;border-top:4px solid #555"></div>
</div></div>
<!-- annotation -->
<svg class="a" style="left:0;top:0" width="1590" height="946" viewBox="0 0 1590 946">
 <path d="M1238.7 458 L1239.2 584" stroke="#ff0000" stroke-width="2.3" fill="none"/>
 <path d="M1238.8 449 L1244 459 L1233.6 459 Z" fill="#ff0000"/>
 <path d="M1241.3 636 L1241.6 893" stroke="#ff0000" stroke-width="2.3" fill="none"/>
 <path d="M1241.6 902 L1246.4 893 L1237 893 Z" fill="#ff0000"/>
</svg>
<div class="t" style="left:1000px;width:405px;text-align:center;top:590px;font-size:16px;line-height:19px;font-weight:bold;color:#ff5b5b">Долг клиента, образованный документом<br>"Реализация товаров и услуг"</div>


</body></html>
